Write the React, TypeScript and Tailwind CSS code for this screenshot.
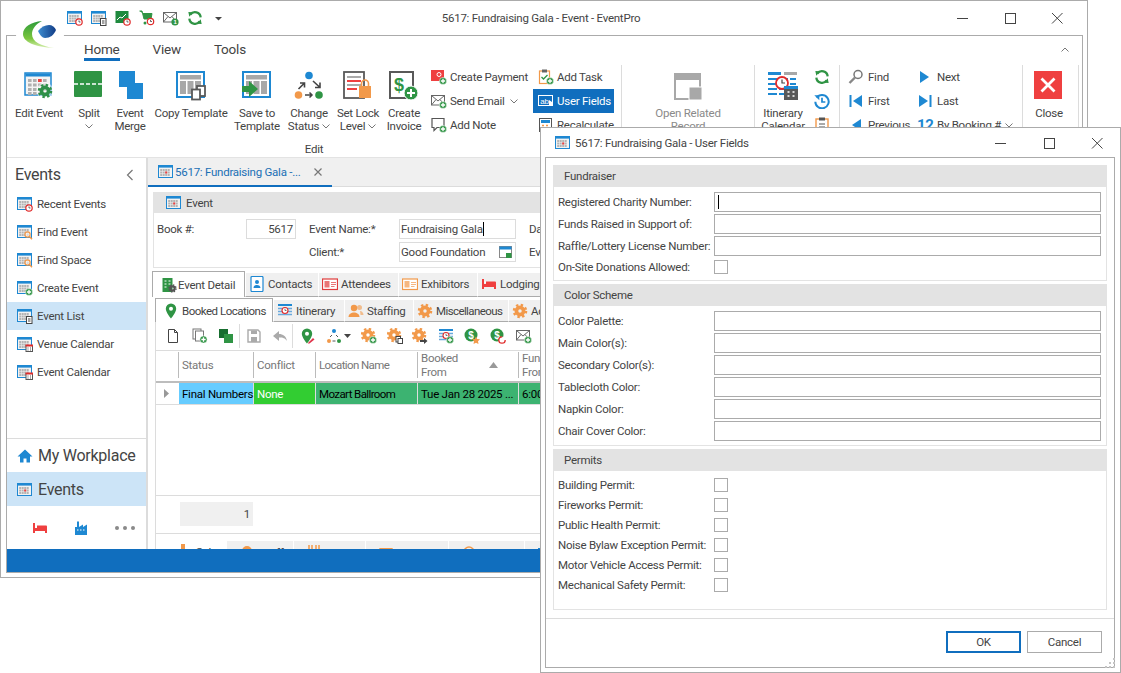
import type { ReactNode } from 'react';

const BLUE = '#1e88d2';
const GREEN = '#2f9444';
const ORANGE = '#f2994a';
const RED = '#ef4040';
const DARK = '#595959';

const Ico = ({ s = 16, v = 16, children }: { s?: number; v?: number; children: ReactNode }) => (
  <svg width={s} height={s} viewBox={`0 0 ${v} ${v}`} className="shrink-0">
    {children}
  </svg>
);

const CalBase = ({ mark = false }: { mark?: boolean }) => (
  <g>
    <rect x="0.5" y="1.5" width="14" height="12" fill="#f2f2f2" stroke={BLUE} />
    <rect x="1" y="2" width="13" height="1.6" fill={BLUE} />
    {[5, 7.5, 10].map((y) =>
      [2.2, 4.7, 7.2, 9.7].map((x) => <rect key={`${x}-${y}`} x={x} y={y} width="2" height="2" fill="#b4b4b4" />)
    )}
    {mark && <rect x="7.2" y="7.5" width="2" height="2" fill={RED} />}
  </g>
);

const Plus = ({ x = 12, y = 12, r = 3.6 }: { x?: number; y?: number; r?: number }) => (
  <g>
    <circle cx={x} cy={y} r={r} fill={GREEN} stroke="#fff" strokeWidth="0.5" />
    <path d={`M${x - r * 0.6} ${y}H${x + r * 0.6}M${x} ${y - r * 0.6}V${y + r * 0.6}`} stroke="#fff" strokeWidth="1.3" />
  </g>
);

const ClockBadge = ({ x = 12, y = 12 }: { x?: number; y?: number }) => (
  <g>
    <circle cx={x} cy={y} r="3.2" fill="#fff" stroke="#e02b2b" strokeWidth="1.2" />
    <path d={`M${x} ${y - 1.6}V${y}H${x + 1.5}`} stroke="#444" strokeWidth="0.8" fill="none" />
  </g>
);

const DocBadge = () => (
  <g>
    <rect x="9.5" y="8.5" width="5.5" height="7" fill="#fff" stroke="#444" />
    <path d="M11 11h2.5M11 13h2.5" stroke="#444" />
  </g>
);

const RedCalBadge = () => (
  <g>
    <rect x="9" y="9.5" width="6.5" height="6" fill="#fff" stroke="#555" />
    <rect x="8.5" y="8.5" width="7.5" height="2" fill="#e02b2b" />
    <path d="M10.5 12h1M13 12h1M10.5 14h1M13 14h1" stroke="#555" />
  </g>
);

const SearchBadge = () => (
  <g>
    <circle cx="10.5" cy="10.5" r="2.6" fill="#fff" fillOpacity="0.5" stroke={ORANGE} strokeWidth="1.2" />
    <path d="M12.5 12.5l2.5 2.8" stroke={ORANGE} strokeWidth="1.4" />
  </g>
);

const CalIcon = ({ badge, mark }: { badge?: string; mark?: boolean }) => (
  <Ico>
    <CalBase mark={mark} />
    {badge === 'clock' && <ClockBadge />}
    {badge === 'search' && <SearchBadge />}
    {badge === 'plus' && <Plus />}
    {badge === 'doc' && <DocBadge />}
    {badge === 'red' && <RedCalBadge />}
  </Ico>
);

const Gear = ({ x = 8, y = 8, r = 6, c = ORANGE }: { x?: number; y?: number; r?: number; c?: string }) => (
  <g>
    <circle cx={x} cy={y} r={r} fill="none" stroke={c} strokeWidth={r * 0.42} strokeDasharray={`${r * 0.3927} ${r * 0.3927}`} />
    <circle cx={x} cy={y} r={r * 0.6} fill="none" stroke={c} strokeWidth={r * 0.62} />
  </g>
);

const Envelope = () => (
  <g>
    <rect x="0.5" y="2.5" width="13" height="9.5" fill="#fff" stroke="#666" />
    <path d="M0.5 2.5L7 8l6.5-5.5M0.5 12L5 6.5M13.5 12L9 6.5" fill="none" stroke="#666" />
  </g>
);

const Pin = ({ c = GREEN }: { c?: string }) => (
  <path fillRule="evenodd" fill={c} d="M8 0.5a5.2 5.2 0 0 0-5.2 5.2C2.8 9.300 8 15.500 8 15.500s5.200-6.200 5.200-9.800A5.200 5.200 0 0 0 8 0.500zm0 3.200a2 2 0 1 1 0 4 2 2 0 0 1 0-4z" />
);

const IdCard = ({ c }: { c: string }) => (
  <Ico>
    <rect x="0.5" y="3" width="15" height="10.500" fill="#fff" stroke={c} strokeWidth="1.200" />
    <rect x="2.500" y="5" width="5" height="6.500" fill={c} fillOpacity="0.7" />
    <path d="M9 6.500h5M9 8.500h5M9 10.500h3.500" stroke={c} strokeOpacity="0.7" />
  </Ico>
);

const Bed = ({ c = RED }: { c?: string }) => (
  <Ico>
    <path fill={c} d="M1 3h2v5h2V5.500h9.500A1.500 1.500 0 0 1 15 7v6h-2v-2H3v2H1z" />
    <rect x="3.500" y="5.500" width="1.500" height="1.500" fill="#fff" />
  </Ico>
);

const Itin = ({ badge }: { badge?: boolean }) => (
  <Ico>
    <rect x="1" y="1" width="14" height="2" fill={BLUE} />
    <path d="M1 5.500h14M1 8.500h14M1 11.500h14" stroke="#6aa9dc" strokeWidth="1.400" />
    <circle cx="8" cy="7.500" r="3" fill="#fff" stroke="#e02b2b" strokeWidth="1.100" />
    <path d="M8 5.800V7.500h1.500" stroke="#444" strokeWidth="0.700" fill="none" />
    {badge && <Plus />}
  </Ico>
);

const Money = ({ children }: { children?: ReactNode }) => (
  <Ico>
    <circle cx="7" cy="7" r="6.500" fill={GREEN} />
    <text x="7" y="10.500" fontSize="10" fontWeight="700" fill="#fff" textAnchor="middle" fontFamily="Liberation Sans, sans-serif">
      $
    </text>
    {children}
  </Ico>
);

const RefreshGreen = () => (
  <Ico v={24}>
    <path fill="none" stroke={GREEN} strokeWidth="3.400" d="M20.500 11A8.500 8.500 0 0 0 5 7M3.500 13a8.500 8.500 0 0 0 15.500 4" />
    <path fill={GREEN} d="M2 3l7 .500L3.500 10zM22 21l-7-.500L20.500 14z" />
  </Ico>
);

const TemplateBase = () => (
  <g>
    <rect x="1" y="1" width="27" height="25" fill="#fff" stroke={BLUE} strokeWidth="2" />
    <rect x="4" y="4" width="21" height="4.500" fill="#a8a8a8" />
    <rect x="4" y="10" width="6" height="13" fill="#a8a8a8" />
    <rect x="11.500" y="10" width="6" height="13" fill="#a8a8a8" />
    <rect x="19" y="10" width="6" height="13" fill="#a8a8a8" />
  </g>
);

const bigIcons: Record<string, ReactNode> = {
  edit: (
    <g>
      <rect x="1" y="2" width="26" height="22" fill="#f4f4f4" stroke={BLUE} strokeWidth="1.500" />
      <rect x="1.500" y="2.500" width="25" height="3" fill={BLUE} />
      {[8, 12.500, 17, 21].map((y) => [4, 9, 14, 19].map((x) => <rect key={`${x}-${y}`} x={x} y={y} width="3.600" height="3" fill="#b0b0b0" />))}
      <rect x="14" y="8" width="3.600" height="3" fill={RED} />
      <circle cx="21" cy="20" r="8.500" fill="#fff" fillOpacity="0.5" />
      <Gear x={21} y={20} r={6} c="#2f8f48" />
    </g>
  ),
  split: (
    <g>
      <rect x="0" y="0" width="28" height="26" rx="1" fill={GREEN} />
      <path d="M0 13h28" stroke="#fff" strokeWidth="1.600" strokeDasharray="4 2" />
    </g>
  ),
  merge: (
    <g>
      <rect x="4" y="0" width="16" height="16" fill={BLUE} />
      <rect x="12" y="12" width="16" height="16" fill={BLUE} />
    </g>
  ),
  copy: (
    <g>
      <TemplateBase />
      <rect x="21" y="15" width="8" height="10" fill="#fff" stroke={DARK} strokeWidth="1.800" />
      <rect x="16" y="18.500" width="8" height="10" fill="#fff" stroke={DARK} strokeWidth="1.800" />
    </g>
  ),
  save: (
    <g>
      <TemplateBase />
      <path d="M0 15h8v-5l9 8-9 8v-5H0z" fill={GREEN} transform="translate(-1 0)" />
    </g>
  ),
  status: (
    <g>
      <circle cx="15" cy="4.500" r="3.800" fill={BLUE} />
      <circle cx="4.500" cy="24" r="3.800" fill={ORANGE} />
      <circle cx="25" cy="24" r="3.800" fill={GREEN} />
      <path d="M11 24h7M15.500 21.500l2.500 2.500-2.500 2.500" stroke="#444" strokeWidth="1.500" fill="none" />
      <path d="M4.500 18l5.500-5.500M6 12h4.500v4.500M19 10l6.500 6M21 16.500h5v-5" stroke="#444" strokeWidth="1.600" fill="none" />
    </g>
  ),
  lock: (
    <g>
      <rect x="1" y="1" width="20" height="26" fill="#fff" stroke={DARK} strokeWidth="1.800" />
      <path d="M4 6h14M4 14h14" stroke="#aaa" strokeWidth="1.800" />
      <path d="M4 10h14M4 18h10" stroke={RED} strokeWidth="1.800" />
      <rect x="16" y="15" width="12" height="12" fill={ORANGE} />
      <path d="M18.500 15v-2.500a3.500 3.500 0 0 1 7 0V15" fill="none" stroke={ORANGE} strokeWidth="1.600" />
    </g>
  ),
  invoice: (
    <g>
      <rect x="1" y="1" width="23" height="26" fill="#fff" stroke={DARK} strokeWidth="2" />
      <text x="10" y="20" fontSize="18" fontWeight="700" fill={GREEN} textAnchor="middle" fontFamily="Liberation Sans, sans-serif">
        $
      </text>
      <circle cx="22" cy="22" r="7" fill={GREEN} stroke="#fff" />
      <path d="M18 22h8M22 18v8" stroke="#fff" strokeWidth="2" />
    </g>
  ),
  related: (
    <g>
      <rect x="2" y="3" width="25" height="25" fill="none" stroke="#a8a8a8" strokeWidth="2" />
      <rect x="2" y="3" width="25" height="6" fill="#a8a8a8" />
      <rect x="16" y="16" width="13" height="13" fill="#a8a8a8" stroke="#fff" />
    </g>
  ),
  itinerary: (
    <g>
      <rect x="0" y="1" width="13" height="3" fill={BLUE} />
      <rect x="16" y="1" width="13" height="3" fill="#a8a8a8" />
      <path d="M0 8h28M0 13h28M0 18h28M0 23h16" stroke={BLUE} strokeWidth="2" strokeDasharray="9 2" />
      <circle cx="14" cy="12" r="6" fill="#fff" stroke="#e02b2b" strokeWidth="1.800" />
      <path d="M14 8.500V12h3" stroke="#444" strokeWidth="1.200" fill="none" />
      <rect x="16" y="15" width="14" height="14" fill={DARK} />
      <rect x="16" y="15" width="14" height="3" fill={BLUE} />
      <path d="M19.500 21h2M24.500 21h2M19.500 25h2M24.500 25h2" stroke="#fff" strokeWidth="1.500" />
    </g>
  ),
  close: (
    <g>
      <rect x="0" y="0" width="28" height="28" fill={RED} />
      <path d="M7.500 7.500l13 13M20.500 7.500l-13 13" stroke="#fff" strokeWidth="2.800" />
    </g>
  ),
};

const Chevron = ({ c = '#777' }: { c?: string }) => (
  <svg width="8" height="5" viewBox="0 0 8 5" className="inline-block shrink-0">
    <path d="M0.500 0.500L4 4l3.500-3.500" fill="none" stroke={c} />
  </svg>
);

const BigBtn = ({ icon, lines, chev, below, w, gray }: { icon: string; lines: string[]; chev?: boolean; below?: boolean; w: string; gray?: boolean }) => (
  <div className={`${w} shrink-0 flex flex-col items-center pt-[6px]`}>
    <Ico s={30} v={30}>
      {bigIcons[icon]}
    </Ico>
    <div className={`mt-[6px] text-center leading-[13px] whitespace-nowrap ${gray ? 'text-[#8a8a8a]' : ''}`}>
      {lines.map((l, i) => (
        <div key={l} className="flex items-center justify-center gap-[3px]">
          {l}
          {chev && i === lines.length - 1 && <Chevron />}
        </div>
      ))}
      {below && (
        <div className="flex justify-center pt-[4px]">
          <Chevron />
        </div>
      )}
    </div>
  </div>
);

const SmallBtn = ({ icon, label, chev, active, w = 'w-[100px]' }: { icon: ReactNode; label: string; chev?: boolean; active?: boolean; w?: string }) => (
  <div className={`${w} h-[24px] flex items-center gap-[3px] whitespace-nowrap ${active ? 'bg-[#106ebe] text-white' : ''}`}>
    {icon}
    <span>{label}</span>
    {chev && <span className="ml-[2px] flex"><Chevron /></span>}
  </div>
);

const navItems = [
  { label: 'Recent Events', badge: 'clock' },
  { label: 'Find Event', badge: 'search' },
  { label: 'Find Space', badge: 'search' },
  { label: 'Create Event', badge: 'plus' },
  { label: 'Event List', badge: 'doc', active: true },
  { label: 'Venue Calendar', badge: 'red' },
  { label: 'Event Calendar', badge: 'red' },
];

const WinControls = ({ gap, mr }: { gap: string; mr: string }) => (
  <div className={`flex items-center ${gap} ${mr}`}>
    <svg width="16" height="16" viewBox="0 0 16 16"><path d="M2 8.500h11" stroke="#444" /></svg>
    <svg width="16" height="16" viewBox="0 0 16 16"><rect x="3.500" y="3.500" width="10" height="10" fill="none" stroke="#444" /></svg>
    <svg width="16" height="16" viewBox="0 0 16 16"><path d="M3 3l10.500 10.500M13.500 3L3 13.500" stroke="#444" /></svg>
  </div>
);

const QatIcons = [
  <CalIcon key="a" badge="clock" />,
  <CalIcon key="b" badge="doc" />,
  <Ico key="c">
    <rect x="0.500" y="1" width="13" height="12" fill="#1f8a3e" />
    <path d="M2 10l3-3 2 1 4-4" stroke="#fff" fill="none" />
    <ClockBadge />
  </Ico>,
  <Ico key="d">
    <path d="M0.500 1h2.500l2 8h7l1-5.500H4" fill={GREEN} stroke={GREEN} />
    <circle cx="6" cy="13" r="1.500" fill={GREEN} />
    <ClockBadge x={11.500} y={11.500} />
  </Ico>,
  <Ico key="e">
    <Envelope />
    <circle cx="12" cy="12" r="3.600" fill={GREEN} />
    <text x="12" y="14.200" fontSize="6" fontWeight="700" fill="#fff" textAnchor="middle" fontFamily="Liberation Sans, sans-serif">1</text>
  </Ico>,
  <RefreshGreen key="f" />,
  <svg key="g" width="16" height="16" viewBox="0 0 16 16"><path d="M4 7h7l-3.500 3.500z" fill="#444" /></svg>,
];

const topTabs = [
  { label: 'Contacts', w: 'w-[73px]', icon: (
    <Ico>
      <rect x="2" y="0.500" width="12" height="15" rx="1" fill="#fff" stroke={BLUE} strokeWidth="1.200" />
      <circle cx="8" cy="6" r="2" fill={BLUE} />
      <path d="M4.500 12c0-4 7-4 7 0z" fill={BLUE} />
    </Ico>
  ) },
  { label: 'Attendees', w: 'w-[80px]', icon: <IdCard c="#e03c3c" /> },
  { label: 'Exhibitors', w: 'w-[79px]', icon: <IdCard c={ORANGE} /> },
  { label: 'Lodging', w: 'w-[90px]', icon: <Bed /> },
];

const subTabs = [
  { label: 'Itinerary', w: 'w-[71px]', text: '', icon: <Itin /> },
  { label: 'Staffing', w: 'w-[69px]', text: '', icon: (
    <Ico>
      <circle cx="6" cy="5" r="3.200" fill={ORANGE} />
      <path d="M0.500 14c0-6 11-6 11 0z" fill={ORANGE} />
      <circle cx="11.500" cy="4.500" r="2.500" fill={ORANGE} fillOpacity="0.6" />
      <path d="M12 8c2 0 3.500 2 3.500 4h-3z" fill={ORANGE} fillOpacity="0.6" />
    </Ico>
  ) },
  { label: 'Miscellaneous', w: 'w-[95px]', text: 'tracking-[-0.6px]', icon: <Ico><Gear /></Ico> },
  { label: 'Activities', w: 'w-[80px]', text: '', icon: <Ico><Gear /></Ico> },
];

const toolbarIcons = [
  { id: 'new', w: 'w-[26px]', node: (
    <Ico>
      <path d="M3.500 1.500h6l3 3v10h-9z" fill="#fff" stroke="#444" />
      <path d="M9.500 1.500v3h3" fill="none" stroke="#444" />
    </Ico>
  ) },
  { id: 'dup', w: 'w-[27px]', node: (
    <Ico>
      <rect x="1" y="1" width="8" height="10" fill="#fff" stroke="#777" />
      <rect x="3.500" y="3" width="8" height="10" fill="#fff" stroke="#777" />
      <Plus x={11.500} y={11.500} />
    </Ico>
  ) },
  { id: 'green', w: 'w-[27px]', sep: true, node: (
    <Ico>
      <rect x="1" y="1" width="9" height="9" fill="#176e2f" />
      <rect x="6" y="6" width="9" height="9" fill={GREEN} />
    </Ico>
  ) },
  { id: 'save', w: 'w-[27px]', node: (
    <Ico>
      <path d="M2 2h10l2 2v10H2z" fill="none" stroke="#aaa" strokeWidth="1.400" />
      <rect x="5" y="2.500" width="6" height="3.500" fill="#aaa" />
      <rect x="5" y="9" width="6" height="5" fill="#aaa" />
    </Ico>
  ) },
  { id: 'undo', w: 'w-[26px]', sep: true, node: (
    <Ico>
      <path d="M1 8l6-5v3c4 0 7 2 8 7-2-3-4-3.500-8-3.500V13z" fill="#aaa" />
    </Ico>
  ) },
  { id: 'pin', w: 'w-[27px]', node: (
    <Ico>
      <Pin />
      <path d="M9 15l5-5 1.500 1.500-5 4H9z" fill="#e0344b" />
    </Ico>
  ) },
  { id: 'st', w: 'w-[36px]', node: (
    <span className="flex items-center gap-[2px]">
      <Ico>
        <circle cx="8" cy="3" r="2" fill={BLUE} />
        <circle cx="3" cy="13" r="2" fill={ORANGE} />
        <circle cx="13" cy="13" r="2" fill={GREEN} />
        <path d="M6.500 13h3M4 9l2-2M12 9l-2-2" stroke="#444" strokeWidth="0.900" />
      </Ico>
      <svg width="7" height="4" viewBox="0 0 7 4"><path d="M0 0h7L3.500 4z" fill="#444" /></svg>
    </span>
  ) },
  { id: 'g1', w: 'w-[26px]', node: <Ico><Gear x={7} y={7} /><Plus /></Ico> },
  { id: 'g2', w: 'w-[25px]', node: (
    <Ico>
      <Gear x={7} y={7} />
      <rect x="9" y="8.500" width="4.500" height="5.500" fill="#fff" stroke="#444" />
      <rect x="11" y="10.500" width="4.500" height="5" fill="#fff" stroke="#444" />
    </Ico>
  ) },
  { id: 'g3', w: 'w-[26px]', node: (
    <Ico>
      <Gear x={7} y={7} />
      <path d="M8 12h4v-2l3.500 3-3.500 3v-2H8z" fill="#444" />
    </Ico>
  ) },
  { id: 'it', w: 'w-[26px]', node: <Itin badge /> },
  { id: 'm1', w: 'w-[26px]', node: (
    <Money>
      <path d="M12 8.500l1.200 2.500 2.800.300-2 2 .500 2.700-2.500-1.300-2.500 1.300.500-2.700-2-2 2.800-.300z" fill={ORANGE} />
    </Money>
  ) },
  { id: 'm2', w: 'w-[26px]', node: (
    <Money>
      <circle cx="12" cy="12" r="3.200" fill="#fff" stroke="#e02b2b" strokeWidth="1.300" strokeDasharray="15 5" />
    </Money>
  ) },
  { id: 'mail', w: 'w-[26px]', node: (
    <Ico>
      <Envelope />
      <Plus />
    </Ico>
  ) },
];

const bottomTabs = [
  { label: 'Sales', w: 'w-[64px]', icon: <rect x="6" y="0" width="4" height="16" fill={ORANGE} /> },
  { label: 'Staff', w: 'w-[67px]', icon: <circle cx="8" cy="6" r="5" fill={ORANGE} /> },
  { label: 'Catering', w: 'w-[72px]', icon: <path d="M3 0v16M6 0v16M10 0v16M13 0v16" stroke={ORANGE} strokeWidth="1.500" /> },
  { label: 'Expenses', w: 'w-[83px]', icon: <path d="M1 3h14L8 14z" fill={ORANGE} /> },
  { label: 'Bookings', w: 'w-[76px]', icon: <circle cx="8" cy="7" r="5" fill="none" stroke={ORANGE} strokeWidth="1.500" /> },
  { label: 'Notes', w: 'w-[60px]', icon: <rect x="1" y="3" width="14" height="10" fill={BLUE} /> },
];

const Field = ({ cursor }: { cursor?: boolean }) => (
  <div className="h-[20px] flex-1 border border-[#ababab] bg-white flex items-center pl-[3px]">
    {cursor && <div className="w-px h-[14px] bg-black" />}
  </div>
);

const Check = () => <div className="w-[14px] h-[14px] border border-[#ababab] bg-white" />;

const DlgHead = ({ title }: { title: string }) => (
  <div className="h-[22px] shrink-0 bg-[#e3e3e3] flex items-center pl-[11px]">{title}</div>
);

const fundraiser = ['Registered Charity Number:', 'Funds Raised in Support of:', 'Raffle/Lottery License Number:'];
const colors = ['Color Palette:', 'Main Color(s):', 'Secondary Color(s):', 'Tablecloth Color:', 'Napkin Color:', 'Chair Cover Color:'];
const permits = ['Building Permit:', 'Fireworks Permit:', 'Public Health Permit:', 'Noise Bylaw Exception Permit:', 'Motor Vehicle Access Permit:', 'Mechanical Safety Permit:'];

const App = () => {
  return (
    <div className="relative w-[1121px] h-[673px] bg-white overflow-hidden font-['Roboto',sans-serif] text-[11.5px] leading-[16px] tracking-[-0.25px] text-[#444]">
      {/* main window */}
      <div className="absolute left-0 top-0 w-[1088px] h-[578px] border border-[#ababab] bg-white flex flex-col overflow-hidden">
        <div className="h-[34px] shrink-0 flex items-center">
          <div className="flex items-center pl-[62px]">
            {QatIcons.map((q, i) => (
              <div key={i} className="w-[24px] flex justify-center">{q}</div>
            ))}
          </div>
          <div className="w-[620px] text-center">5617: Fundraising Gala - Event - EventPro</div>
          <div className="flex-1" />
          <WinControls gap="gap-[31px]" mr="mr-[22px]" />
        </div>

        <div className="ml-[5px] w-[1077px] h-[538px] border border-[#ababab] flex flex-col overflow-hidden">
          <div className="h-[29px] shrink-0 flex items-start pl-[77px] pr-[13px] gap-[33px] text-[13.5px] tracking-[-0.2px]">
            <div className="h-[25px] pt-[5px] leading-[17px] border-b-[3px] border-[#106ebe]">Home</div>
            <div className="pt-[5px] leading-[17px]">View</div>
            <div className="pt-[5px] leading-[17px]">Tools</div>
            <div className="ml-auto mt-[11px] flex rotate-180"><Chevron /></div>
          </div>

          {/* ribbon */}
          <div className="h-[92px] shrink-0 flex overflow-hidden">
            <div className="w-[615px] shrink-0 border-r border-[#dcdcdc] flex flex-col">
              <div className="h-[76px] flex pl-[5px]">
                <BigBtn icon="edit" lines={['Edit Event']} w="w-[54px]" />
                <BigBtn icon="split" lines={['Split']} below w="w-[46px]" />
                <BigBtn icon="merge" lines={['Event', 'Merge']} w="w-[36px]" />
                <BigBtn icon="copy" lines={['Copy Template']} w="w-[86px]" />
                <BigBtn icon="save" lines={['Save to', 'Template']} w="w-[46px]" />
                <BigBtn icon="status" lines={['Change', 'Status']} chev w="w-[58px]" />
                <BigBtn icon="lock" lines={['Set Lock', 'Level']} chev w="w-[40px]" />
                <BigBtn icon="invoice" lines={['Create', 'Invoice']} w="w-[52px]" />
                <div className="flex flex-col pl-px mr-[3px] w-[100px]">
                  <SmallBtn label="Create Payment" icon={(
                    <Ico>
                      <rect x="0" y="1" width="13" height="11" fill={RED} />
                      <circle cx="8" cy="5.500" r="2" fill="none" stroke="#fff" />
                      <Plus />
                    </Ico>
                  )} />
                  <SmallBtn label="Send Email" chev icon={<Ico><Envelope /><Plus /></Ico>} />
                  <SmallBtn label="Add Note" icon={(
                    <Ico>
                      <path d="M1 1.500h12v9H6l-3 3v-3H1z" fill="#fff" stroke="#555" strokeWidth="1.200" />
                      <Plus />
                    </Ico>
                  )} />
                </div>
                <div className="flex flex-col w-[81px]">
                  <div className="pl-[5px]">
                    <SmallBtn w="w-[76px]" label="Add Task" icon={(
                      <Ico>
                        <rect x="1.500" y="2" width="10" height="12.500" fill="#fff" stroke={ORANGE} strokeWidth="1.200" />
                        <rect x="4" y="0.500" width="5" height="3" fill="#666" />
                        <path d="M3.500 8l2 2 4-4" fill="none" stroke={GREEN} strokeWidth="1.300" />
                        <Plus />
                      </Ico>
                    )} />
                  </div>
                  <div className="bg-[#106ebe] pl-[5px]">
                    <SmallBtn w="w-[76px]" active label="User Fields" icon={(
                      <Ico>
                        <rect x="0.500" y="2.500" width="14" height="10" fill="none" stroke="#fff" />
                        <text x="6.500" y="10.500" fontSize="8" fill="#fff" textAnchor="middle" fontFamily="Liberation Sans, sans-serif">ab</text>
                        <path d="M11 7v6h3V9z" fill="#fff" />
                      </Ico>
                    )} />
                  </div>
                  <div className="pl-[5px]">
                    <SmallBtn w="w-[76px]" label="Recalculate" icon={(
                      <Ico>
                        <rect x="1.500" y="1.500" width="12" height="13" fill="#fff" stroke="#555" />
                        <rect x="3" y="3" width="9" height="3" fill={BLUE} />
                        <path d="M4 8.500h2M8 8.500h2M4 11.500h2" stroke={ORANGE} strokeWidth="1.500" />
                      </Ico>
                    )} />
                  </div>
                </div>
              </div>
              <div className="h-[14px] text-center leading-[16px]">Edit</div>
            </div>

            <div className="w-[133px] shrink-0 border-r border-[#dcdcdc] flex justify-center">
              <BigBtn icon="related" lines={['Open Related', 'Record']} gray w="w-[100px]" />
            </div>

            <div className="w-[85px] shrink-0 border-r border-[#dcdcdc] flex">
              <BigBtn icon="itinerary" lines={['Itinerary', 'Calendar']} w="w-[56px]" />
              <div className="flex flex-col pl-[3px]">
                <div className="h-[24px] flex items-center"><RefreshGreen /></div>
                <div className="h-[24px] flex items-center">
                  <Ico v={24}>
                    <path d="M4 7a10 10 0 1 1-2 6" fill="none" stroke={BLUE} strokeWidth="3" />
                    <path d="M0.500 3.500h7.500V11z" fill={BLUE} />
                    <path d="M12 7v6.500h5" fill="none" stroke={BLUE} strokeWidth="2.600" />
                  </Ico>
                </div>
                <div className="h-[24px] flex items-center">
                  <Ico>
                    <rect x="2" y="2" width="12" height="13" fill="#fff" stroke={ORANGE} strokeWidth="1.400" />
                    <rect x="5" y="0.500" width="6" height="3" fill="#555" />
                    <path d="M5 7h6M5 10h6" stroke="#555" />
                  </Ico>
                </div>
              </div>
            </div>

            <div className="w-[183px] shrink-0 border-r border-[#dcdcdc] flex pl-[8px]">
              <div className="w-[69px] flex flex-col">
                {[
                  { l: 'Find', n: <g><circle cx="10" cy="5.500" r="4" fill="none" stroke="#777" strokeWidth="1.500" /><path d="M7 8.500L1.500 14" stroke="#888" strokeWidth="2.400" /></g> },
                  { l: 'First', n: <g><rect x="1.500" y="2" width="2" height="12" fill={BLUE} /><path d="M14 2v12L5 8z" fill={BLUE} /></g> },
                  { l: 'Previous', n: <path d="M13 2v12L4 8z" fill={BLUE} /> },
                ].map((r) => (
                  <div key={r.l} className="h-[24px] flex items-center gap-[4px]"><Ico>{r.n}</Ico>{r.l}</div>
                ))}
              </div>
              <div className="flex flex-col">
                {[
                  { l: 'Next', n: <path d="M3 2v12l9-6z" fill={BLUE} /> },
                  { l: 'Last', n: <g><path d="M2 2v12l9-6z" fill={BLUE} /><rect x="12.500" y="2" width="2" height="12" fill={BLUE} /></g> },
                ].map((r) => (
                  <div key={r.l} className="h-[24px] flex items-center gap-[4px]"><Ico>{r.n}</Ico>{r.l}</div>
                ))}
                <div className="h-[24px] flex items-center gap-[4px] whitespace-nowrap">
                  <span className="w-[16px] text-[15px] font-bold text-[#1e88d2] leading-none">12</span>
                  By Booking #
                  <Chevron />
                </div>
              </div>
            </div>

            <div className="w-[56px] shrink-0 border-r border-[#dcdcdc] flex justify-center pr-[3px]">
              <BigBtn icon="close" lines={['Close']} w="w-[50px]" />
            </div>
          </div>

          {/* body */}
          <div className="h-[392px] shrink-0 border-t border-[#e3e3e3] flex overflow-hidden">
            <div className="w-[140px] shrink-0 border-r border-[#dcdcdc] flex flex-col">
              <div className="h-[32px] shrink-0 flex items-center justify-between pt-[2px] pl-[8px] pr-[12px] text-[16px]">
                Events
                <svg width="8" height="12" viewBox="0 0 8 12"><path d="M6.500 1L1.500 6l5 5" fill="none" stroke="#777" strokeWidth="1.200" /></svg>
              </div>
              {navItems.map((n) => (
                <div key={n.label} className={`h-[28px] shrink-0 flex items-center pl-[10px] gap-[4px] ${n.active ? 'bg-[#cce4f7]' : ''}`}>
                  <CalIcon badge={n.badge} />
                  {n.label}
                </div>
              ))}
              <div className="flex-1" />
              <div className="h-[34px] shrink-0 border-t border-[#dcdcdc] flex items-center pl-[10px] gap-[5px] text-[16px]">
                <Ico>
                  <path d="M8 1.500L0.500 8.500h2.500v6h3.500v-4h3v4H13v-6h2.500z" fill={BLUE} />
                </Ico>
                My Workplace
              </div>
              <div className="h-[34px] shrink-0 bg-[#cce4f7] flex items-center pt-[2px] pl-[10px] gap-[5px] text-[16px]">
                <CalIcon mark />
                Events
              </div>
              <div className="h-[43px] shrink-0 flex items-center justify-between pl-[25px] pr-[10px]">
                <Bed />
                <Ico>
                  <path fill={BLUE} d="M2 15V7h2V1.500h2V7l4-2.500V7l4-2.500V15z" />
                  <path d="M4 10h1.500M7 10h1.500M10 10h1.500" stroke="#fff" />
                </Ico>
                <svg width="22" height="6" viewBox="0 0 22 6">
                  <circle cx="3" cy="3" r="2" fill="#8a8a8a" /><circle cx="11" cy="3" r="2" fill="#8a8a8a" /><circle cx="19" cy="3" r="2" fill="#8a8a8a" />
                </svg>
              </div>
            </div>

            <div className="flex-1 min-w-0 flex flex-col overflow-hidden border-l border-[#dcdcdc] bg-white">
              <div className="h-[29px] shrink-0 flex bg-[#f0f0f0] border-b border-[#dcdcdc]">
                <div className="w-[184px] h-[29px] shrink-0 border-b-[2px] border-[#106ebe] flex items-center pl-[10px] gap-[1px] text-[#1a6fb5]">
                  <CalIcon mark />
                  <span className="w-[133px] whitespace-nowrap">5617: Fundraising Gala -...</span>
                  <svg width="10" height="10" viewBox="0 0 10 10" className="ml-[4px]"><path d="M1.500 1.500l7 7M8.500 1.500l-7 7" stroke="#777" strokeWidth="1.200" /></svg>
                </div>
              </div>

              <div className="pl-[5px] pt-[5px] flex flex-col">
                <div className="h-[21px] bg-[#e3e3e3] flex items-center pl-[13px] gap-[4px]">
                  <CalIcon mark />
                  Event
                </div>
                <div className="h-[55px] border-x border-b border-[#e3e3e3] pl-[3px] pt-[6px]">
                  <div className="grid grid-cols-[89px_50px_13px_90px_117px_13px_60px] grid-rows-[20px_20px] gap-y-[3px] items-center">
                    <div>Book #:</div>
                    <div className="h-[20px] border border-[#dcdcdc] flex items-center justify-end pr-[2px]">5617</div>
                    <div />
                    <div>Event Name:*</div>
                    <div className="h-[20px] border border-[#dcdcdc] flex items-center pl-[1px]">
                      Fundraising Gala<span className="w-px h-[14px] bg-black" />
                    </div>
                    <div />
                    <div>Date:</div>
                    <div />
                    <div />
                    <div />
                    <div>Client:*</div>
                    <div className="h-[20px] border border-[#dcdcdc] flex items-center justify-between pl-[1px] pr-[3px]">
                      Good Foundation
                      <Ico s={13} v={13}>
                        <rect x="0.500" y="0.500" width="12" height="11" fill="#fff" stroke="#888" />
                        <rect x="0.500" y="0.500" width="12" height="3" fill={BLUE} />
                        <rect x="7" y="7" width="5.500" height="5" fill={GREEN} />
                      </Ico>
                    </div>
                    <div />
                    <div>Event:</div>
                  </div>
                </div>
              </div>

              <div className="pl-[4px] pt-[3px] flex flex-col">
                <div className="h-[26px] shrink-0 flex items-end">
                  <div className="w-[93px] h-[26px] shrink-0 border border-b-0 border-[#ababab] bg-white flex items-center pl-[8px] gap-[1px] whitespace-nowrap">
                    <Ico>
                      <path d="M1.500 1h10v14h-10z" fill={GREEN} />
                      <path d="M3.500 4h2M7.500 4h2M3.500 7h2M7.500 7h2M3.500 10h2" stroke="#fff" />
                      <Gear x={11.500} y={11.500} r={3.500} c="#555" />
                    </Ico>
                    Event Detail
                  </div>
                  {topTabs.map((t) => (
                    <div key={t.label} className={`${t.w} h-[24px] shrink-0 bg-[#f0f0f0] border-l border-white border-b border-b-[#ababab] flex items-center pb-[2px] pl-[3px] gap-[3px] whitespace-nowrap`}>
                      {t.icon}
                      {t.label}
                    </div>
                  ))}
                  <div className="flex-1 h-px bg-[#ababab]" />
                </div>

                <div className="pl-[3px] pt-px flex flex-col">
                  <div className="h-[24px] shrink-0 flex items-end">
                    <div className="w-[118px] h-[24px] shrink-0 border border-b-0 border-[#ababab] bg-white flex items-center pl-[7px] gap-[3px] whitespace-nowrap">
                      <Ico><Pin /></Ico>
                      <span className="tracking-[-0.5px]">Booked Locations</span>
                    </div>
                    {subTabs.map((t) => (
                      <div key={t.label} className={`${t.w} h-[22px] shrink-0 bg-[#f0f0f0] border-l border-white border-b border-b-[#ababab] flex items-center pl-[3px] gap-[3px] whitespace-nowrap`}>
                        {t.icon}
                        <span className={t.text}>{t.label}</span>
                      </div>
                    ))}
                    <div className="flex-1 h-px bg-[#ababab]" />
                  </div>

                  <div className="border-l border-[#dcdcdc] flex flex-col">
                    <div className="h-[28px] shrink-0 flex items-center pl-[4px]">
                      {toolbarIcons.map((t) => (
                        <div key={t.id} className={`${t.w} h-[24px] shrink-0 flex items-center justify-center ${t.sep ? 'border-r border-[#dcdcdc]' : ''}`}>
                          {t.node}
                        </div>
                      ))}
                    </div>

                    <div className="h-[33px] shrink-0 flex border-t border-[#dcdcdc] border-b-2 border-b-[#bdbdbd] text-[#777] leading-[14px]">
                      <div className="w-[23px] shrink-0 border-r border-[#bbb] mt-[1px] mb-[3px]" />
                      <div className="w-[75px] shrink-0 border-r border-[#bbb] mt-[1px] mb-[3px] flex items-center pl-[3px]">Status</div>
                      <div className="w-[62px] shrink-0 border-r border-[#bbb] mt-[1px] mb-[3px] flex items-center pl-[3px]">Conflict</div>
                      <div className="w-[102px] shrink-0 border-r border-[#bbb] mt-[1px] mb-[3px] flex items-center pl-[3px] tracking-[-0.6px]">Location Name</div>
                      <div className="w-[101px] shrink-0 border-r border-[#bbb] mt-[1px] mb-[3px] flex items-center justify-between pl-[3px] pr-[20px]">
                        <span>Booked<br />From</span>
                        <svg width="9" height="6" viewBox="0 0 9 6"><path d="M0 6l4.500-6L9 6z" fill="#999" /></svg>
                      </div>
                      <div className="flex-1 mt-[1px] mb-[3px] flex items-center pl-[3px]"><span>Function<br />From</span></div>
                    </div>

                    <div className="h-[22px] shrink-0 flex border-b border-[#dcdcdc] text-black">
                      <div className="w-[23px] shrink-0 flex items-center justify-center pr-[2px]">
                        <svg width="5" height="9" viewBox="0 0 5 9"><path d="M0 0l5 4.500L0 9z" fill="#999" /></svg>
                      </div>
                      <div className="w-[75px] shrink-0 bg-[#66ccff] border-r border-[#ddd] flex items-center pl-[3px] whitespace-nowrap">Final Numbers</div>
                      <div className="w-[62px] shrink-0 bg-[#32cd32] border-r border-[#ddd] flex items-center pl-[3px] text-white">None</div>
                      <div className="w-[102px] shrink-0 bg-[#3cb371] border-r border-[#ddd] flex items-center pl-[3px] tracking-[-0.6px]">Mozart Ballroom</div>
                      <div className="w-[101px] shrink-0 bg-[#3cb371] border-r border-[#ddd] flex items-center pl-[3px] whitespace-nowrap">Tue Jan 28 2025 ...</div>
                      <div className="flex-1 bg-[#3cb371] flex items-center pl-[3px]">6:00 PM</div>
                    </div>

                    <div className="h-[90px] shrink-0" />

                    <div className="h-[39px] shrink-0 border-y border-[#dcdcdc] pl-[24px] pt-[6px]">
                      <div className="w-[73px] h-[24px] bg-[#f0f0f0] flex items-center justify-end pr-[3px]">1</div>
                    </div>

                    <div className="pl-[6px] pt-[5px] flex items-start">
                      {bottomTabs.map((t, i) => (
                        <div key={t.label} className={`${t.w} h-[24px] shrink-0 flex items-center pl-[12px] gap-[5px] border-l border-white ${i === 0 ? 'border border-b-0 border-[#ababab]' : 'mt-[2px] bg-[#f0f0f0]'}`}>
                          <Ico>{t.icon}</Ico>
                          {t.label}
                        </div>
                      ))}
                    </div>
                  </div>
                </div>
              </div>
            </div>
          </div>

          <div className="h-[23px] shrink-0 bg-[#106ebe]" />
        </div>
      </div>

      {/* logo over the ribbon frame */}
      <div className="absolute left-[16px] top-[12px] w-[48px] h-[48px] rounded-full bg-white flex items-center justify-center">
        <svg width="34" height="32" viewBox="0 0 34 32">
          <defs>
            <linearGradient id="lg" x1="0" y1="0" x2="0" y2="1">
              <stop offset="0" stopColor="#2d9b3a" />
              <stop offset="0.65" stopColor="#7cc63e" />
              <stop offset="1" stopColor="#d8efb0" />
            </linearGradient>
            <linearGradient id="lb" x1="0" y1="0" x2="1" y2="0">
              <stop offset="0" stopColor="#3f8ed0" />
              <stop offset="1" stopColor="#123c86" />
            </linearGradient>
          </defs>
          <path d="M19 1C8 2 0 7 0 14c0 8 12 13 31 14-13-2-22-6-22-14C9 9 13 4 19 1z" fill="url(#lg)" />
          <path d="M15 11c3-4 7-6 11-6 3 0 6 2 7 5-2 5-6 8-11 8-3 0-5-3-7-7z" fill="url(#lb)" />
        </svg>
      </div>

      {/* user fields dialog */}
      <div className="absolute left-[540px] top-[127px] w-[581px] h-[546px] border border-[#ababab] bg-white flex flex-col">
        <div className="h-[29px] shrink-0 flex items-center pl-[14px] gap-[4px]">
          <CalIcon mark />
          <span>5617: Fundraising Gala - User Fields</span>
          <div className="flex-1" />
          <WinControls gap="gap-[32px]" mr="mr-[15px]" />
        </div>
        <div className="ml-[4px] mr-[5px] h-[511px] border border-[#ababab] flex flex-col">
          <div className="h-[460px] shrink-0 px-[7px] pt-[7px] flex flex-col gap-[3px]">
            <div className="h-[116px] shrink-0 flex flex-col">
              <DlgHead title="Fundraiser" />
              <div className="flex-1 border-x border-b border-[#e3e3e3] pl-[4px] pr-[5px] pt-[4px] flex flex-col">
                {fundraiser.map((l, i) => (
                  <div key={l} className="h-[22px] flex items-center">
                    <div className="w-[156px] shrink-0 whitespace-nowrap">{l}</div>
                    <Field cursor={i === 0} />
                  </div>
                ))}
                <div className="h-[20px] flex items-center">
                  <div className="w-[156px] shrink-0 whitespace-nowrap">On-Site Donations Allowed:</div>
                  <Check />
                </div>
              </div>
            </div>
            <div className="h-[162px] shrink-0 flex flex-col">
              <DlgHead title="Color Scheme" />
              <div className="flex-1 border-x border-b border-[#e3e3e3] pl-[4px] pr-[5px] pt-[4px] flex flex-col">
                {colors.map((l) => (
                  <div key={l} className="h-[22px] flex items-center">
                    <div className="w-[156px] shrink-0 whitespace-nowrap">{l}</div>
                    <Field />
                  </div>
                ))}
              </div>
            </div>
            <div className="h-[161px] shrink-0 flex flex-col">
              <DlgHead title="Permits" />
              <div className="flex-1 border-x border-b border-[#e3e3e3] pl-[4px] pr-[5px] pt-[4px] flex flex-col">
                {permits.map((l) => (
                  <div key={l} className="h-[20px] flex items-center">
                    <div className="w-[156px] shrink-0 whitespace-nowrap">{l}</div>
                    <Check />
                  </div>
                ))}
              </div>
            </div>
          </div>
          <div className="flex-1 border-t border-[#dcdcdc] relative flex justify-end gap-[6px] pr-[12px] pt-[12px]">
            <div className="w-[75px] h-[22px] border-2 border-[#106ebe] flex items-center justify-center">OK</div>
            <div className="w-[75px] h-[22px] border border-[#ababab] flex items-center justify-center">Cancel</div>
            <svg width="10" height="10" viewBox="0 0 10 10" className="absolute -right-px -bottom-px">
              <path d="M8 0h2v2H8zM4 4h2v2H4zM8 4h2v2H8zM0 8h2v2H0zM4 8h2v2H4zM8 8h2v2H8z" fill="#c4c4c4" />
            </svg>
          </div>
        </div>
      </div>
    </div>
  );
};

export default App;
